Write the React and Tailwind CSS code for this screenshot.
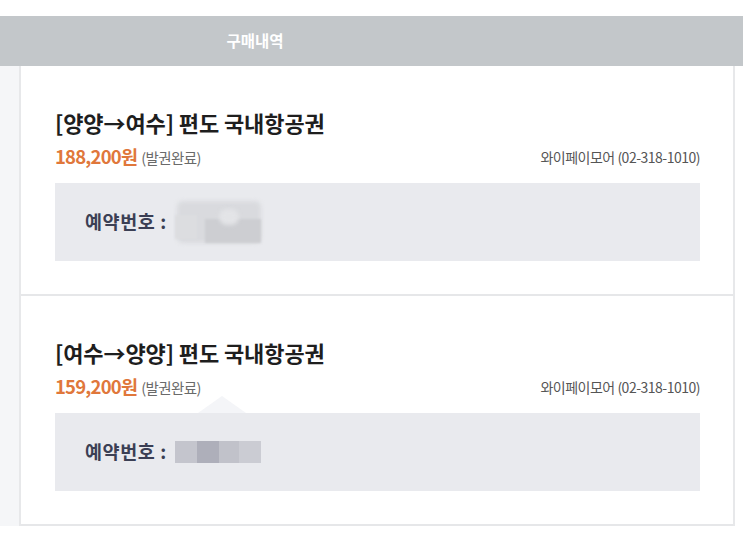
import React from "react";

const font = { fontFamily: '"Noto Sans CJK KR", "Noto Sans", sans-serif' };

function Blur1() {
  return (
    <div className="relative ml-[8px] h-[46px] w-[88px]">
      <div className="absolute left-[2px] top-[2px] h-[42px] w-[84px] rounded-[6px] bg-[#d9dade] blur-[2px]" />
      <div className="absolute left-[30px] top-[20px] h-[24px] w-[56px] bg-[#cdced2] blur-[1px]" />
      <div className="absolute left-[44px] top-[10px] h-[16px] w-[20px] rounded-full bg-[#e3e4e7] blur-[2px]" />
      <div className="absolute left-[0px] top-[16px] h-[24px] w-[22px] bg-[#dcdde0] blur-[1px]" />
    </div>
  );
}

function Blur2() {
  return (
    <div className="ml-[8px] flex h-[22px] w-[86px] blur-[0.6px]">
      <div className="h-full w-[22px] bg-[#c4c5cd]" />
      <div className="h-full w-[22px] bg-[#aeafba]" />
      <div className="h-full w-[20px] bg-[#c1c2ca]" />
      <div className="h-full w-[22px] bg-[#cbccd3]" />
    </div>
  );
}

function Card({ title, price, blur, triangle }) {
  return (
    <div className="relative border-b-2 border-[#e6e7e9] pl-[34px] pr-[33px] pt-[42px] pb-[33px]">
      <div className="text-[22px] font-bold leading-[29px] text-[#1e1e1e] tracking-[-0.1px]">{title}</div>
      <div className="mt-[10px] flex h-[20px] items-center justify-between">
        <div className="flex items-baseline">
          <span className="text-[18.5px] font-bold tracking-[-0.8px] text-[#e0773b]">{price}</span>
          <span className="ml-[4px] text-[14.5px] tracking-[-0.6px] text-[#6a6a6a]">(발권완료)</span>
        </div>
        <span className="text-[14px] tracking-[-0.5px] text-[#555]">와이페이모어 (02-318-1010)</span>
      </div>
      <div className="relative mt-[16px] flex h-[78px] items-center bg-[#e9eaee] pl-[30px]">
        {triangle && (
          <div className="absolute left-[143px] top-[-17px] h-0 w-0 border-b-[17px] border-l-[24px] border-r-[24px] border-b-[#f4f5f8] border-l-transparent border-r-transparent" />
        )}
        <span className="text-[18.5px] font-bold tracking-[0.6px] text-[#3b3f54]">예약번호 :</span>
        {blur}
      </div>
    </div>
  );
}

export default function App() {
  return (
    <div className="h-[558px] w-[743px] overflow-hidden bg-white" style={font}>
      <div className="h-[16px]" />
      <div className="flex h-[50px] items-center bg-[#c3c7ca]">
        <div className="w-[510px] text-center text-[15.5px] font-bold text-white">구매내역</div>
      </div>
      <div className="flex">
        <div className="w-[21px] border-r-2 border-[#e7e8ea] bg-[#f5f6f8]" />
        <div className="w-[714px] border-r-2 border-[#e7e8ea]">
          <Card title="[양양→여수] 편도 국내항공권" price="188,200원" blur={<Blur1 />} />
          <Card title="[여수→양양] 편도 국내항공권" price="159,200원" blur={<Blur2 />} triangle />
        </div>
        <div className="flex-1" />
      </div>
    </div>
  );
}
